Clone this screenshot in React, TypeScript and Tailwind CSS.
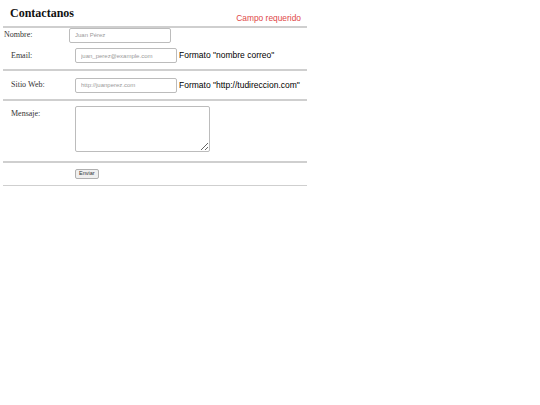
import React from 'react';

const serif = { fontFamily: '"Liberation Serif", "Times New Roman", serif' };
const sans = { fontFamily: '"Liberation Sans", Arial, sans-serif' };

function Campo({ placeholder, className = '' }: { placeholder: string; className?: string }) {
  return (
    <input
      type="text"
      placeholder={placeholder}
      style={sans}
      className={`h-[15px] w-[102px] rounded-[2px] border border-[#bcbcbc] bg-white px-[5px] text-[6px] text-[#333] outline-none placeholder:text-[#9a9a9a] ${className}`}
    />
  );
}

export default function App() {
  return (
    <div className="min-h-[405px] w-[540px] bg-white">
      <div className="ml-[3px] w-[304px]">
        {/* encabezado */}
        <div className="flex h-[28px] items-end justify-between border-b-2 border-[#cfcfcf] pb-[7px]">
          <h1 style={serif} className="ml-[7px] text-[12px] font-bold leading-none text-[#111]">
            Contactanos
          </h1>
          <span style={sans} className="mr-[6px] mb-[-3px] text-[8.4px] leading-none text-[#e04848]">
            Campo requerido
          </span>
        </div>

        {/* nombre */}
        <div className="flex h-[14px] items-center">
          <label style={serif} className="w-[66px] pl-[1px] text-[8px] text-[#333]">
            Nombre:
          </label>
          <Campo placeholder="Juan Pérez" />
        </div>

        {/* email */}
        <div className="flex h-[29px] items-center border-b-2 border-[#cfcfcf]">
          <label style={serif} className="w-[72px] pl-[8px] text-[8px] text-[#333]">
            Email:
          </label>
          <Campo placeholder="juan_perez@example.com" />
          <span style={sans} className="ml-[2px] text-[8.5px] text-black">
            Formato "nombre correo"
          </span>
        </div>

        {/* sitio web */}
        <div className="flex h-[30px] items-center border-b-2 border-[#cfcfcf]">
          <label style={serif} className="w-[72px] pl-[8px] text-[8px] text-[#333]">
            Sitio Web:
          </label>
          <Campo placeholder="http://juanperez.com" />
          <span style={sans} className="ml-[2px] text-[8.5px] text-black">
            Formato "http://tudireccion.com"
          </span>
        </div>

        {/* mensaje */}
        <div className="flex h-[62px] items-start border-b-2 border-[#cfcfcf] pt-[5px]">
          <label style={serif} className="w-[72px] pt-[4px] pl-[8px] text-[8px] leading-none text-[#333]">
            Mensaje:
          </label>
          <textarea className="h-[46px] w-[135px] rounded-[2px] border border-[#bcbcbc] bg-white outline-none" />
        </div>

        {/* enviar */}
        <div className="flex h-[23px] items-center border-b border-[#cfcfcf]">
          <div className="w-[72px]" />
          <button
            type="button"
            style={sans}
            className="h-[10px] rounded-[2px] border border-[#b0b0b0] bg-[#efefef] px-[3px] text-[5.5px] leading-none text-[#333]"
          >
            Enviar
          </button>
        </div>
      </div>
    </div>
  );
}
